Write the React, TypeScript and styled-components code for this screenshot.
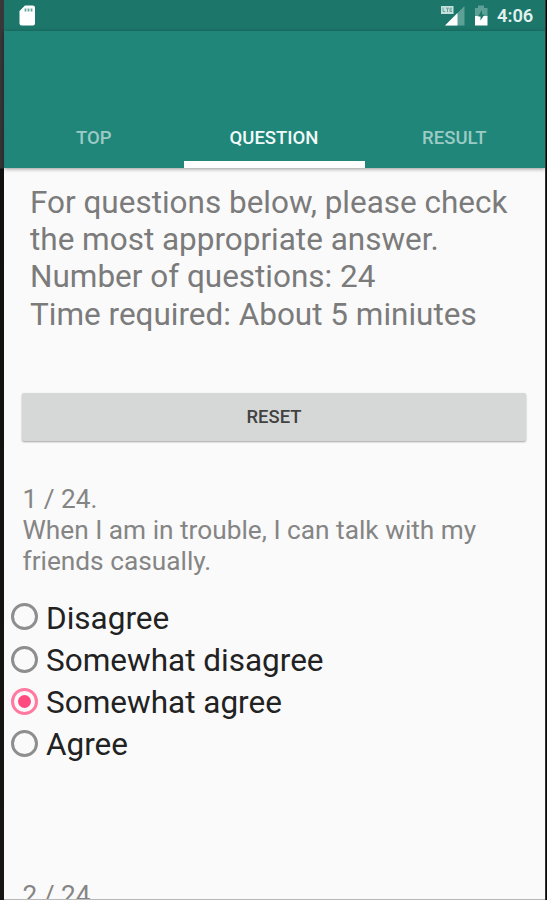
import React, { useState } from "react";
import styled, { createGlobalStyle } from "styled-components";

const GlobalStyle = createGlobalStyle`
  *, *::before, *::after { box-sizing: border-box; }
  html, body { margin: 0; height: 900px; overflow: hidden; background: #fafafa; }
  body { font-family: Roboto, "Liberation Sans", sans-serif; }
`;

const Frame = styled.div`
  display: flex;
  width: 547px;
  height: 900px;
  overflow: hidden;
`;

const LeftBezel = styled.div`
  flex: 0 0 4px;
  background: linear-gradient(#38383b 0, #333436 168px, #11100f 169px, #171513 100%);
`;

const RightBezel = styled.div`
  flex: 0 0 2px;
  background: #080808;
  border-left: 1px solid #333;
`;

const Screen = styled.div`
  flex: 1;
  display: flex;
  flex-direction: column;
  min-width: 0;
  background: #fafafa;
  border-bottom: 1px solid #b8b8b8;
`;

const StatusBar = styled.div`
  flex: 0 0 31px;
  display: flex;
  align-items: flex-start;
  padding: 5px 11px 0 14px;
  background: #1c766a;
  svg { display: block; }
`;

const StatusIcons = styled.div`
  display: flex;
  gap: 7px;
  margin-left: auto;
`;

const Clock = styled.time`
  margin-left: 1px;
  width: 37px;
  font-size: 18.3px;
  font-weight: 600;
  line-height: 22px;
  color: #e0f1ee;
  white-space: nowrap;
`;

const AppBar = styled.header`
  flex: 0 0 137px;
  display: flex;
  align-items: flex-end;
  background: #208679;
  box-shadow: 0 1px 4px rgba(0, 0, 0, 0.4);
`;

const Tab = styled.button<{ $active: boolean }>`
  flex: 1;
  height: 61px;
  padding: 9px 1px 0 0;
  border: 0;
  border-bottom: 7px solid ${(p) => (p.$active ? "#fff" : "transparent")};
  background: none;
  font: 500 18.5px/45px Roboto, sans-serif;
  color: ${(p) => (p.$active ? "#f2faf9" : "#9bcbc5")};
`;

const Content = styled.main`
  flex: 1;
  min-height: 0;
  overflow: hidden;
  padding: 16px 18px 0 18px;
`;

const Intro = styled.p`
  margin: 0 0 60px 8px;
  font-size: 31.48px;
  line-height: 37.2px;
  color: #7b7b7b;
  white-space: pre;
`;

const ResetButton = styled.button`
  display: block;
  width: 504px;
  height: 48px;
  margin: 0;
  padding: 0;
  border: 0;
  border-radius: 2px;
  background: #d6d8d7;
  box-shadow: 0 1px 2px rgba(0, 0, 0, 0.35);
  font: 500 18.4px/48px Roboto, sans-serif;
  color: #414242;
`;

const Question = styled.p`
  margin: 43px 0 0 0.5px;
  font-size: 26.25px;
  line-height: 31px;
  color: #858585;
  white-space: pre;
`;

const Options = styled.div`
  display: flex;
  flex-direction: column;
  margin: 21px 0 0 -11px;
`;

const Option = styled.label`
  display: flex;
  align-items: center;
  height: 42.2px;
  font-size: 31.5px;
  line-height: 42px;
  color: #222;
  white-space: nowrap;
`;

const Radio = styled.span<{ $on: boolean }>`
  display: flex;
  align-items: center;
  justify-content: center;
  width: 27px;
  height: 27px;
  margin: -4px 8px 0 0;
  border: 3px solid ${(p) => (p.$on ? "#ff79a0" : "#8e8e8e")};
  border-radius: 50%;
  &::after {
    content: "";
    width: 13px;
    height: 13px;
    border-radius: 50%;
    background: ${(p) => (p.$on ? "#ff4b80" : "transparent")};
  }
`;

const HiddenInput = styled.input`
  appearance: none;
  width: 0;
  height: 0;
  margin: 0;
`;

const NextQuestion = styled(Question)`
  margin-top: 113px;
`;

const tabs = ["TOP", "QUESTION", "RESULT"];
const answers = ["Disagree", "Somewhat disagree", "Somewhat agree", "Agree"];

const SdCardIcon = () => (
  <svg width="19" height="21" viewBox="0 0 19 21">
    <path d="M7 0.5H14.7Q17 0.5 17 2.8V18.5Q17 20.5 15 20.5H3.5Q1.5 20.5 1.5 18.5V6Z" fill="#fff" />
    <path d="M7.5 3.5V6.5M10.5 3.5V6.5M13.5 3.5V6.5" stroke="#66a69d" strokeWidth="1.8" />
  </svg>
);

const SignalIcon = () => (
  <svg width="26" height="22" viewBox="0 0 26 22">
    <path d="M5 20.5L24.5 1V20.5Z" fill="#5da096" />
    <path d="M5 20.5L17.5 8V20.5Z" fill="#fff" />
    <path d="M1 1H13.5V9H1Z" fill="#c4e0dc" />
    <path d="M3 2.5V6.5H5M6 3.2H9M7.5 3.2V7M12 3.2H10V6.5H12M10 5H12" fill="none" stroke="#6aa59d" />
  </svg>
);

const BatteryIcon = () => (
  <svg width="16" height="22" viewBox="0 0 16 22">
    <path d="M5 0.5H11V3H14.5V12H2V3H5Z" fill="#5da096" />
    <path d="M2 11H14.5V20.5H2Z" fill="#fff" />
    <path d="M9 5L5 11.5H7.5V15.5L11.5 9.5H9Z" fill="#1c766a" />
  </svg>
);

export default function App() {
  const [activeTab, setActiveTab] = useState(1);
  const [selected, setSelected] = useState(2);

  return (
    <>
      <GlobalStyle />
      <Frame>
        <LeftBezel />
        <Screen>
          <StatusBar>
            <SdCardIcon />
            <StatusIcons>
              <SignalIcon />
              <BatteryIcon />
              <Clock>4:06</Clock>
            </StatusIcons>
          </StatusBar>
          <AppBar>
            {tabs.map((name, i) => (
              <Tab key={name} $active={i === activeTab} onClick={() => setActiveTab(i)}>
                {name}
              </Tab>
            ))}
          </AppBar>
          <Content>
            <Intro>
              {"For questions below, please check\nthe most appropriate answer.\nNumber of questions: 24\nTime required: About 5 miniutes"}
            </Intro>
            <ResetButton onClick={() => setSelected(-1)}>RESET</ResetButton>
            <Question>{"1 / 24.\nWhen I am in trouble, I can talk with my\nfriends casually."}</Question>
            <Options>
              {answers.map((answer, i) => (
                <Option key={answer}>
                  <HiddenInput type="radio" name="q1" checked={i === selected} onChange={() => setSelected(i)} />
                  <Radio $on={i === selected} />
                  {answer}
                </Option>
              ))}
            </Options>
            <NextQuestion>2 / 24.</NextQuestion>
          </Content>
        </Screen>
        <RightBezel />
      </Frame>
    </>
  );
}
